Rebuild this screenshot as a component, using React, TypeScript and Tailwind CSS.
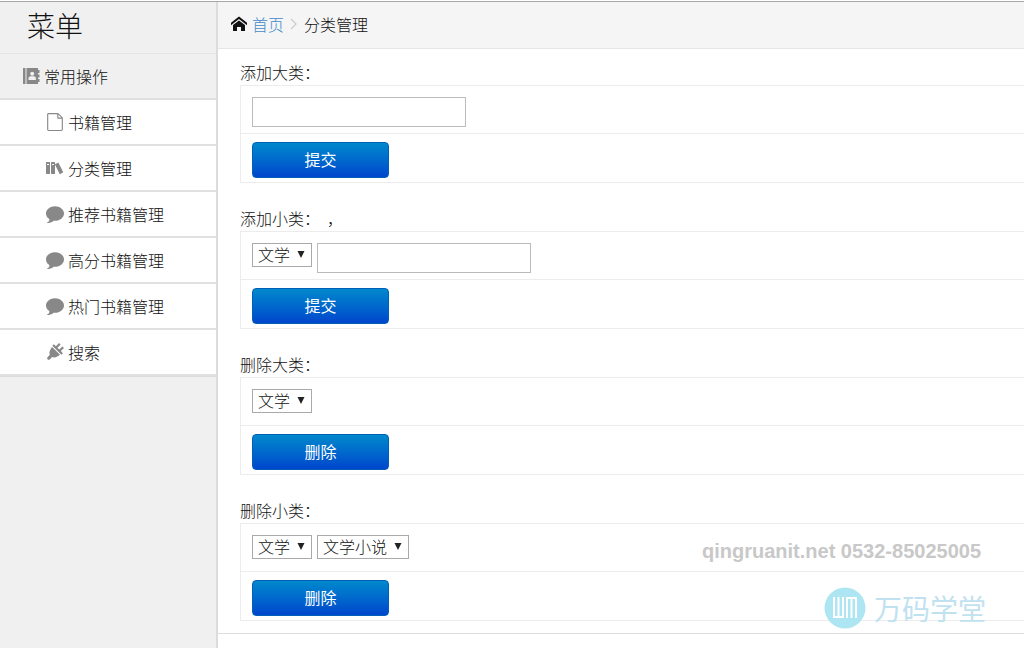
import type { ReactNode } from "react";
import { ImBooks, ImBubble, ImFileEmpty, ImHome, ImPowerCord } from "react-icons/im";

const MENU = [
  { label: "书籍管理", icon: ImFileEmpty },
  { label: "分类管理", icon: ImBooks },
  { label: "推荐书籍管理", icon: ImBubble },
  { label: "高分书籍管理", icon: ImBubble },
  { label: "热门书籍管理", icon: ImBubble },
  { label: "搜索", icon: ImPowerCord },
];

function Sidebar() {
  return (
    <aside className="flex w-[218px] shrink-0 flex-col border-r-2 border-[#dcdcdc] bg-[#f0f0f0]">
      <h1 className="h-[52px] border-b border-[#e4e4e4] pl-[27px] text-[28px] leading-[46px]">菜单</h1>
      <nav>
        <a href="#" className="flex h-[46px] items-center gap-1 border-b-2 border-[#e0e0e0] pl-[22px]">
          <svg viewBox="0 0 18 18" className="h-[18px] w-[18px]" aria-hidden="true">
            <path
              fill="#888"
              d="M1 1h2.500v16H1zM4.500 1H16v2h1.500v3H16v1.500h1.500v3H16V12h1.500v3H16v2H4.500z"
            />
            <circle cx="10.2" cy="6.8" r="2" fill="#f0f0f0" />
            <path fill="#f0f0f0" d="M6.500 13v-1.500c0-1.500 1-2.300 2.300-2.300h2.800c1.300 0 2.300.8 2.300 2.300V13z" />
          </svg>
          常用操作
        </a>
        <ul className="border-b border-[#dcdcdc]">
          {MENU.map(({ label, icon: Icon }) => (
            <li key={label}>
              <a
                href="#"
                className="flex h-[46px] items-center gap-1 border-b-2 border-[#e0e0e0] bg-white pl-[46px]"
              >
                <Icon className="h-[18px] w-[18px] text-[#888]" />
                {label}
              </a>
            </li>
          ))}
        </ul>
      </nav>
    </aside>
  );
}

function TextBox({ label }: { label: string }) {
  return (
    <input
      type="text"
      aria-label={label}
      className="h-[30px] w-[214px] border border-[#bbb] bg-white px-2 outline-none focus:border-[#0088cc]"
    />
  );
}

function Select({ label, options }: { label: string; options: string[] }) {
  return (
    <span className="relative inline-flex">
      <select
        aria-label={label}
        className="h-6 appearance-none border border-[#a9a9a9] bg-white pr-5 pb-[2px] pl-[5px] text-[16px] leading-5 outline-none"
      >
        {options.map((o) => (
          <option key={o}>{o}</option>
        ))}
      </select>
      <svg
        viewBox="0 0 8 7"
        aria-hidden="true"
        className="pointer-events-none absolute top-2 right-[7px] h-[7px] w-2 fill-[#222]"
      >
        <path d="M.5 0h7L4 7z" />
      </svg>
    </span>
  );
}

function FormBlock({ title, action, children }: { title: string; action: string; children: ReactNode }) {
  return (
    <form className="mb-6" onSubmit={(e) => e.preventDefault()}>
      <h2 className="h-6 whitespace-pre leading-[22px]">{title}</h2>
      <div className="border border-r-0 border-[#ececec]">
        <div className="flex h-12 items-start gap-[5px] border-b border-[#ececec] px-[11px] pt-[11px]">{children}</div>
        <div className="flex h-12 items-start px-[11px] pt-2">
          <button
            type="submit"
            className="h-9 w-[137px] rounded border border-[#0060b8] bg-linear-to-b from-[#0088cc] to-[#0044cc] pb-[2px] font-normal text-white"
          >
            {action}
          </button>
        </div>
      </div>
    </form>
  );
}

function Watermark() {
  return (
    <div className="pointer-events-none absolute right-[38px] bottom-[19px] flex flex-col items-end">
      <p className="mr-[5px] font-['Liberation_Sans',sans-serif] text-[20px] leading-6 font-bold text-[#c8c8c8]">
        qingruanit.net 0532-85025005
      </p>
      <div className="mt-6 flex items-center gap-2">
        <svg viewBox="0 0 42 42" className="h-[42px] w-[42px]" aria-hidden="true">
          <circle cx="21" cy="21" r="20.5" fill="#ade6f2" />
          <g fill="none" stroke="#fff" strokeWidth="2">
            <path d="M10 10v20h9V10M14.500 10v20" />
            <path d="M23 31V11h9v20M27.500 31V11" />
          </g>
        </svg>
        <span className="text-[28px] leading-[38px] font-normal text-[#c0e2f0]">万码学堂</span>
      </div>
    </div>
  );
}

export default function App() {
  return (
    <div className="relative flex min-h-screen flex-col bg-white pt-px font-['Noto_Sans_CJK_SC',sans-serif] text-[16px] font-light text-[#111]">
      <div className="flex grow border-t border-[#a5aaa5]">
        <Sidebar />
        <div className="min-w-0 grow">
          <header className="flex h-[47px] items-center border-b border-[#e6e6e6] bg-[#f5f5f5] pb-[3px] pl-[13px]">
            <ImHome className="mr-[5px] h-4 w-4" />
            <a href="#" className="text-[#428bca]">
              首页
            </a>
            <svg viewBox="0 0 8 12" className="mx-[6px] h-3 w-2" aria-hidden="true">
              <path d="M1 1l5 5-5 5" fill="none" stroke="#ccc" strokeWidth="1.2" />
            </svg>
            <span>分类管理</span>
          </header>
          <main className="border-b border-[#dedede] pt-3 pl-[22px]">
            <FormBlock title="添加大类：" action="提交">
              <TextBox label="大类名称" />
            </FormBlock>
            <FormBlock title="添加小类：  ，" action="提交">
              <Select label="所属大类" options={["文学"]} />
              <TextBox label="小类名称" />
            </FormBlock>
            <FormBlock title="删除大类：" action="删除">
              <Select label="大类" options={["文学"]} />
            </FormBlock>
            <div className="-mb-3">
              <FormBlock title="删除小类：" action="删除">
                <Select label="大类" options={["文学"]} />
                <Select label="小类" options={["文学小说"]} />
              </FormBlock>
            </div>
          </main>
        </div>
      </div>
      <Watermark />
    </div>
  );
}
